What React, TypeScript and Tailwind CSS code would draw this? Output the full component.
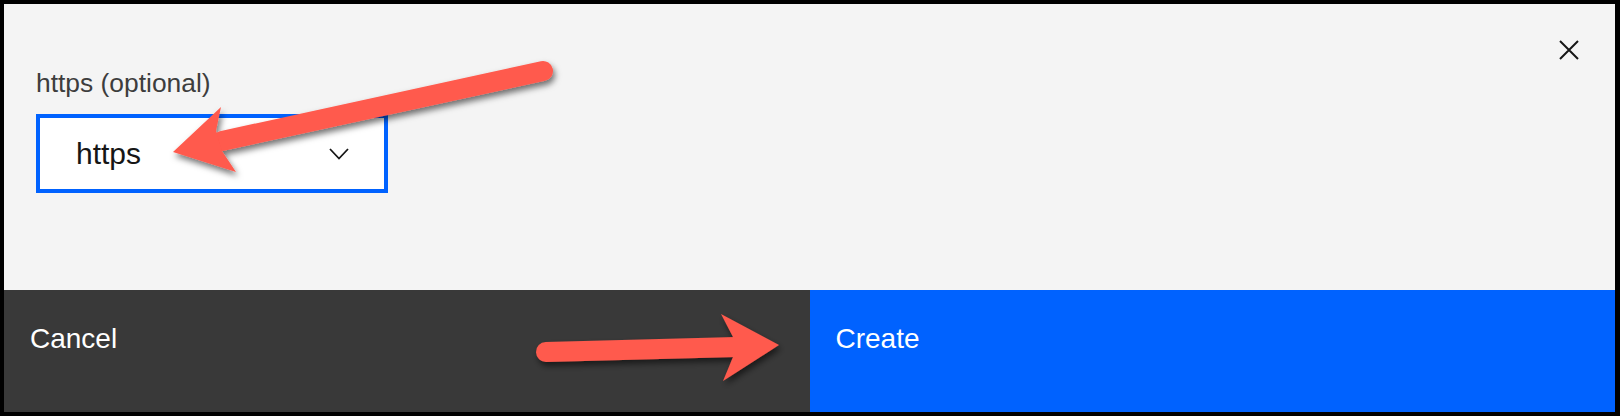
import React from "react";

function Arrows() {
  return (
    <svg
      className="pointer-events-none absolute left-0 top-0"
      width="1620"
      height="416"
      viewBox="0 0 1620 416"
    >
      <defs>
        <filter id="sh" x="-20%" y="-50%" width="140%" height="200%">
          <feDropShadow dx="2" dy="4" stdDeviation="3" floodColor="#000" floodOpacity="0.55" />
        </filter>
      </defs>
      <g filter="url(#sh)" fill="#ff5a4d">
        <line x1="543" y1="71" x2="222" y2="141" stroke="#ff5a4d" strokeWidth="20" strokeLinecap="round" />
        <polygon points="216,131 221,107 173,152 236,172 222,151" />
      </g>
      <g filter="url(#sh)" fill="#ff5a4d">
        <line x1="546" y1="352" x2="736" y2="347" stroke="#ff5a4d" strokeWidth="20" strokeLinecap="round" />
        <polygon points="733,337 721,314 779,345 723,381 733,357" />
      </g>
    </svg>
  );
}

export default function App() {
  const font = { fontFamily: '"Liberation Sans", Arial, sans-serif' };
  return (
    <div className="relative h-[416px] w-[1620px] bg-black pl-[4px] pr-[5px] pt-[4px] pb-[4px]" style={font}>
      <div className="flex h-full w-full flex-col">
        <div className="flex h-[286px] justify-between bg-[#f4f4f4]">
          <div className="flex flex-col pl-[32px] pt-[64px]">
            <div className="text-[26.4px] leading-[30px] text-[#3d3d3d]">https (optional)</div>
            <div className="mt-[16px] flex h-[79px] w-[352px] items-center justify-between border-[4px] border-[#0062ff] bg-white pl-[36px] pr-[35px]">
              <span className="text-[30px] leading-[34px] text-[#161616]">https</span>
              <svg width="20" height="12" viewBox="0 0 20 12">
                <polyline points="1,1 10,10.5 19,1" fill="none" stroke="#161616" strokeWidth="1.8" />
              </svg>
            </div>
          </div>
          <div className="pr-[36px] pt-[36px]">
            <svg width="20" height="20" viewBox="0 0 20 20">
              <path d="M1 1 L19 19 M19 1 L1 19" stroke="#161616" strokeWidth="2" />
            </svg>
          </div>
        </div>
        <div className="grid flex-1 grid-cols-2">
          <div className="bg-[#393939] pl-[26px] pt-[33px] text-[28px] leading-[32px] text-white">Cancel</div>
          <div className="bg-[#0062ff] pl-[26px] pt-[33px] text-[28px] leading-[32px] text-white">Create</div>
        </div>
      </div>
      <Arrows />
    </div>
  );
}
